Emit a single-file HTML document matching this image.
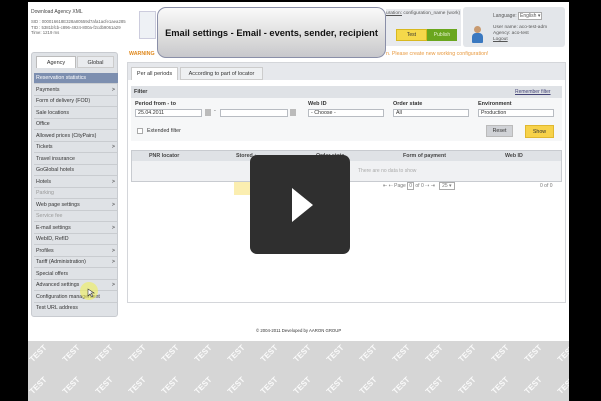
<!DOCTYPE html><html><head><style>
*{margin:0;padding:0;box-sizing:border-box}
body{width:601px;height:401px;background:#000;position:relative;overflow:hidden;font-family:"Liberation Sans",sans-serif;font-size:5.5px;color:#333}
.a{position:absolute}
.page{left:28px;top:2px;width:541px;height:399px;background:#fff}
.grey{left:28px;top:341px;width:541px;height:60px;background:#d6d6d6;overflow:hidden}
.t{position:absolute;color:#fff;font-weight:bold;font-size:8px;transform:rotate(-45deg);opacity:.9}
.menu{left:31px;top:52px;width:87px;height:265px;background:#dfe2e6;border:1px solid #c8cbd0;border-radius:3px}
.mi{position:absolute;left:2px;width:84px;height:11px;border-bottom:1px solid #c9ccd0;padding-left:2px;line-height:11px;font-size:5.3px;color:#333}
.mi b{position:absolute;right:3px;font-weight:normal}
.panel{left:127px;top:62px;width:439px;height:241px;border:1px solid #d4d6da;background:#fff}
.sel{position:absolute;height:8px;border:1px solid #b8bcc2;background:#fff;font-size:5.3px;line-height:7px;padding-left:2px}
.lbl{position:absolute;font-weight:bold;font-size:5.5px;color:#333}
</style></head><body>
<div class="a page"></div>
<div class="a" style="left:31px;top:9px;font-size:5px;color:#444">Download Agency XML</div>
<div class="a" style="left:31px;top:19px;font-size:4.3px;color:#666;line-height:5.5px">SID : 000016618E328a80559d7afa1acfe1aea285<br>TID : 5381bfcb-c896-4924-800a-f2cdb9061a29<br>Time: 1219 ms</div>
<div class="a" style="left:139px;top:11px;width:17px;height:28px;background:#eef1f5;border:1px solid #ccd"></div>
<div class="a" style="left:157px;top:7px;width:229px;height:51px;border:1px solid #8a8fa8;border-radius:9px;background:linear-gradient(#fafafa,#dcdcdc 60%,#c8c8cc);font-weight:bold;font-size:9.3px;line-height:50px;text-align:center;color:#111">Email settings - Email - events, sender, recipient</div>
<div class="a" style="left:386px;top:9px;width:75px;height:37px;background:#e8eaee"></div>
<div class="a" style="left:386px;top:11px;font-size:4.8px;color:#555"><u>uration:</u> configuration_name (work)</div>
<div class="a" style="left:396px;top:29px;width:31px;height:12px;background:#f5d84a;border:1px solid #d8b820;font-size:5px;text-align:center;line-height:11px">Test</div>
<div class="a" style="left:427px;top:29px;width:30px;height:12px;background:#6aa61e;color:#e6f3d0;font-size:5px;text-align:center;line-height:12px">Publish</div>
<div class="a" style="left:463px;top:7px;width:102px;height:40px;background:#e3e6ea;border-radius:3px"></div>
<div class="a" style="left:472px;top:26px;width:11px;height:17px;"><div class="a" style="left:2px;top:0;width:7px;height:7px;border-radius:50%;background:#c89a70"></div><div class="a" style="left:0;top:7px;width:11px;height:10px;border-radius:4px 4px 1px 1px;background:#3a78c0"></div></div>
<div class="a" style="left:493px;top:13px;font-size:5px;color:#555">Language: <span style="border:1px solid #aaa;background:#fff;padding:0 1px">English ▾</span></div>
<div class="a" style="left:493px;top:25px;font-size:4.8px;color:#555;line-height:6px">User name: aco-test-adm<br>Agency: aco-test<br><u>Logout</u></div>
<div class="a" style="left:129px;top:51px;font-size:5.3px;color:#e08a20;font-weight:bold">WARNING</div>
<div class="a" style="left:386px;top:51px;font-size:5.3px;color:#e89a40">n. Please create new working configuration!</div>
<div class="a menu">
<div class="a" style="left:4px;top:3px;width:40px;height:12px;background:#fff;border:1px solid #bbb;border-bottom:none;text-align:center;line-height:12px;font-size:5.5px">Agency</div>
<div class="a" style="left:45px;top:3px;width:37px;height:12px;background:#e9ebee;border:1px solid #ccc;text-align:center;line-height:12px;font-size:5.5px">Global</div>
<div class="mi" style="top:20px;background:#7d8fb0;color:#fff">Reservation statistics</div>
<div class="mi" style="top:32px">Payments<b>&gt;</b></div>
<div class="mi" style="top:43px">Form of delivery (FOD)</div>
<div class="mi" style="top:55px">Sale locations</div>
<div class="mi" style="top:66px">Office</div>
<div class="mi" style="top:78px">Allowed prices (CityPairs)</div>
<div class="mi" style="top:89px">Tickets<b>&gt;</b></div>
<div class="mi" style="top:101px">Travel insurance</div>
<div class="mi" style="top:112px">GoGlobal hotels</div>
<div class="mi" style="top:124px">Hotels<b>&gt;</b></div>
<div class="mi" style="top:135px;color:#999">Parking</div>
<div class="mi" style="top:147px">Web page settings<b>&gt;</b></div>
<div class="mi" style="top:158px;color:#999">Service fee</div>
<div class="mi" style="top:170px">E-mail settings<b>&gt;</b></div>
<div class="mi" style="top:181px">WebID, RefID</div>
<div class="mi" style="top:193px">Profiles<b>&gt;</b></div>
<div class="mi" style="top:204px">Tariff (Administration)<b>&gt;</b></div>
<div class="mi" style="top:216px">Special offers</div>
<div class="mi" style="top:227px">Advanced settings<b>&gt;</b></div>
<div class="mi" style="top:239px">Configuration management</div>
<div class="mi" style="top:250px;border:none">Test URL address</div>
</div>
<div class="a" style="left:80px;top:282px;width:18px;height:18px;border-radius:50%;background:rgba(240,240,90,.6)"></div>
<div class="a panel">
<div class="a" style="left:0;top:0;width:437px;height:17px;background:#e6e8ec"></div>
<div class="a" style="left:3px;top:4px;width:47px;height:13px;background:#fff;border:1px solid #ccc;border-bottom:none;font-size:5.5px;line-height:12px;text-align:center">Per all periods</div>
<div class="a" style="left:52px;top:4px;width:83px;height:13px;background:#eef0f2;border:1px solid #ccc;font-size:5.5px;line-height:12px;text-align:center">According to part of locator</div>
<div class="a" style="left:3px;top:23px;width:431px;height:12px;background:#dfe2e6;font-weight:bold;font-size:5.5px;line-height:12px;padding-left:3px">Filter</div>
<div class="a" style="left:387px;top:26px;font-size:5px;color:#447;text-decoration:underline">Remember filter</div>
<div class="a" style="left:3px;top:35px;width:431px;height:43px;background:#f6f7f8"></div>
<div class="lbl" style="left:7px;top:38px">Period from - to</div>
<div class="sel" style="left:7px;top:46px;width:67px">25.04.2011</div>
<div class="a" style="left:77px;top:46px;width:6px;height:7px;background:#bbb"></div>
<div class="a" style="left:86px;top:45px">-</div>
<div class="sel" style="left:92px;top:46px;width:68px"></div>
<div class="a" style="left:162px;top:46px;width:6px;height:7px;background:#bbb"></div>
<div class="lbl" style="left:180px;top:38px">Web ID</div>
<div class="sel" style="left:180px;top:46px;width:76px">- Choose -</div>
<div class="lbl" style="left:265px;top:38px">Order state</div>
<div class="sel" style="left:265px;top:46px;width:76px">All</div>
<div class="lbl" style="left:350px;top:38px">Environment</div>
<div class="sel" style="left:350px;top:46px;width:76px">Production</div>
<div class="a" style="left:9px;top:65px;width:6px;height:6px;border:1px solid #aaa;background:#fff"></div>
<div class="a" style="left:19px;top:65px;font-size:5.3px">Extended filter</div>
<div class="a" style="left:358px;top:62px;width:27px;height:12px;background:#d0d2d6;border:1px solid #bbb;font-size:5.3px;text-align:center;line-height:11px">Reset</div>
<div class="a" style="left:397px;top:62px;width:29px;height:13px;background:#f7d24a;border:1px solid #e0b830;font-size:5.3px;text-align:center;line-height:12px">Show</div>
<div class="a" style="left:3px;top:87px;width:431px;height:32px;border:1px solid #c8cbd0;background:#f0f1f3"></div>
<div class="a" style="left:4px;top:88px;width:429px;height:10px;background:#dfe2e6;font-weight:bold;font-size:5.3px;line-height:10px;color:#444">
<span class="a" style="left:17px">PNR locator</span><span class="a" style="left:104px">Stored ↓</span><span class="a" style="left:184px">Order state</span><span class="a" style="left:271px">Form of payment</span><span class="a" style="left:373px">Web ID</span></div>
<div class="a" style="left:230px;top:105px;font-size:5px;color:#aaa">There are no data to show</div>
<div class="a" style="left:255px;top:120px;font-size:5px;color:#777">⇤ ⇠ Page <span style="border:1px solid #aaa;padding:0 1px">0</span> of 0 ⇢ ⇥ &nbsp; <span style="border:1px solid #aaa;padding:0 2px">25 ▾</span></div>
<div class="a" style="left:412px;top:120px;font-size:5px;color:#777">0 of 0</div>
<div class="a" style="left:106px;top:119px;width:45px;height:13px;background:#fbeeb0"></div>
</div>
<div class="a" style="left:250px;top:155px;width:100px;height:99px;background:#2f2f2f;border-radius:7px"></div>
<svg class="a" style="left:250px;top:155px" width="100" height="99"><polygon points="42,33 42,67 63,50" fill="#fff"/></svg>
<svg class="a" style="left:87px;top:288px" width="8" height="10"><polygon points="1,1 1,8 3,6 5,9 6,8 4,5 7,5" fill="#fff" stroke="#333" stroke-width=".6"/></svg>
<div class="a" style="left:256px;top:328px;font-size:4.3px;color:#333">© 2004-2011 Developed by AARON GROUP</div>
<div class="a grey">
<span class="t" style="left:0;top:8px">TEST</span><span class="t" style="left:33px;top:8px">TEST</span><span class="t" style="left:66px;top:8px">TEST</span><span class="t" style="left:99px;top:8px">TEST</span><span class="t" style="left:132px;top:8px">TEST</span><span class="t" style="left:165px;top:8px">TEST</span><span class="t" style="left:198px;top:8px">TEST</span><span class="t" style="left:231px;top:8px">TEST</span><span class="t" style="left:264px;top:8px">TEST</span><span class="t" style="left:297px;top:8px">TEST</span><span class="t" style="left:330px;top:8px">TEST</span><span class="t" style="left:363px;top:8px">TEST</span><span class="t" style="left:396px;top:8px">TEST</span><span class="t" style="left:429px;top:8px">TEST</span><span class="t" style="left:462px;top:8px">TEST</span><span class="t" style="left:495px;top:8px">TEST</span><span class="t" style="left:528px;top:8px">TEST</span>
<span class="t" style="left:0;top:40px">TEST</span><span class="t" style="left:33px;top:40px">TEST</span><span class="t" style="left:66px;top:40px">TEST</span><span class="t" style="left:99px;top:40px">TEST</span><span class="t" style="left:132px;top:40px">TEST</span><span class="t" style="left:165px;top:40px">TEST</span><span class="t" style="left:198px;top:40px">TEST</span><span class="t" style="left:231px;top:40px">TEST</span><span class="t" style="left:264px;top:40px">TEST</span><span class="t" style="left:297px;top:40px">TEST</span><span class="t" style="left:330px;top:40px">TEST</span><span class="t" style="left:363px;top:40px">TEST</span><span class="t" style="left:396px;top:40px">TEST</span><span class="t" style="left:429px;top:40px">TEST</span><span class="t" style="left:462px;top:40px">TEST</span><span class="t" style="left:495px;top:40px">TEST</span><span class="t" style="left:528px;top:40px">TEST</span>
</div>
</body></html>
